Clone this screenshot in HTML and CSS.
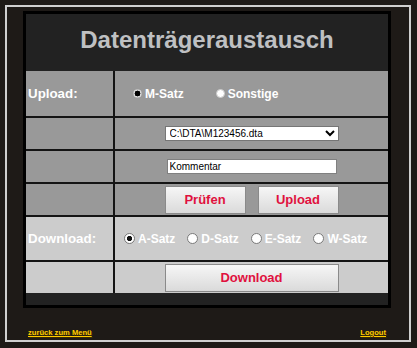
FILE: index.html
```html
<!DOCTYPE html>
<html lang="de">
<head>
    <meta charset="UTF-8">
    <meta name="viewport" content="width=device-width, initial-scale=1.0">
    <title>Datenträgeraustausch</title>
    <link rel="stylesheet" href="styles.css">
</head>
<body>
    <div class="frame">
        <div class="panel">
            <h1 class="title">Datenträgeraustausch</h1>

            <div class="form-grid">
                <!-- Upload -->
                <div class="label dark">Upload:</div>
                <div class="field dark radios radios-upload">
                    <label class="radio-item"><input type="radio" name="up" class="radio small" checked> M-Satz</label>
                    <label class="radio-item"><input type="radio" name="up" class="radio small"> Sonstige</label>
                </div>

                <div class="label dark"></div>
                <div class="field dark centered">
                    <select class="file-select">
                        <option>C:\DTA\M123456.dta</option>
                    </select>
                </div>

                <div class="label dark"></div>
                <div class="field dark centered">
                    <input type="text" class="comment" value="Kommentar">
                </div>

                <div class="label dark"></div>
                <div class="field dark centered buttons">
                    <button class="btn">Prüfen</button>
                    <button class="btn">Upload</button>
                </div>

                <!-- Download -->
                <div class="label light">Download:</div>
                <div class="field light radios radios-download">
                    <label class="radio-item"><input type="radio" name="down" class="radio" checked> A-Satz</label>
                    <label class="radio-item"><input type="radio" name="down" class="radio"> D-Satz</label>
                    <label class="radio-item"><input type="radio" name="down" class="radio"> E-Satz</label>
                    <label class="radio-item"><input type="radio" name="down" class="radio"> W-Satz</label>
                </div>

                <div class="label light"></div>
                <div class="field light centered">
                    <button class="btn btn-wide">Download</button>
                </div>
            </div>
        </div>

        <div class="links">
            <a href="#">zurück zum Menü</a>
            <a href="#">Logout</a>
        </div>
    </div>
</body>
</html>
```

FILE: styles.css
```css
body {
    margin: 0;
    padding: 0;
    background-color: #1e1a17;
    font-family: "Liberation Sans", Arial, sans-serif;
}
.frame {
    box-sizing: border-box;
    width: 406px;
    height: 337px;
    margin: 5px;
    padding: 4px 18px 0 16px;
    border: 2px solid #cfcfcf;
}
.panel {
    box-sizing: border-box;
    width: 368px;
    height: 297px;
    border: 3px solid #000;
    background-color: #222;
}
.title {
    margin: 0;
    height: 57px;
    line-height: 51px;
    text-align: center;
    font-size: 24px;
    font-weight: bold;
    color: #bfc0c2;
}
.form-grid {
    display: grid;
    grid-template-columns: 87px 1fr;
    grid-template-rows: 45px 31px 31px 31px 43px 31px;
    gap: 2px;
    background-color: #141414;
}
.dark {
    background-color: #999;
}
.light {
    background-color: #ccc;
}
.label {
    display: flex;
    align-items: center;
    padding-left: 2px;
    font-size: 13.33px;
    font-weight: bold;
    color: #fff;
}
.field {
    display: flex;
    align-items: center;
}
.centered {
    justify-content: center;
}
.radios {
    font-size: 12px;
    font-weight: bold;
    color: #fff;
}
.radios-upload {
    padding-left: 18px;
    gap: 32px;
}
.radios-download {
    padding-left: 9px;
    gap: 12px;
}
.radio-item {
    display: flex;
    align-items: center;
    gap: 3px;
}
.radio {
    appearance: none;
    -webkit-appearance: none;
    margin: 0;
    width: 11px;
    height: 11px;
    border-radius: 50%;
    border: 1px solid #7a7a7a;
    background: #fff;
}
.radio:checked {
    background: radial-gradient(circle, #111 0 38%, #fff 46%);
}
.radio.small {
    width: 9px;
    height: 9px;
    border: 1px solid #c8c8c8;
}
.radio.small:checked {
    background: radial-gradient(circle, #000 0 55%, #fff 65%);
}
.file-select {
    box-sizing: border-box;
    width: 174px;
    height: 15px;
    padding: 0;
    border: 1px solid #767676;
    border-radius: 0;
    background-color: #fff;
    font-family: "Liberation Sans", Arial, sans-serif;
    font-size: 10px;
    color: #000;
}
.comment {
    box-sizing: border-box;
    width: 170px;
    height: 15px;
    padding: 0 2px;
    border: 1px solid #808080;
    font-family: "Liberation Sans", Arial, sans-serif;
    font-size: 10px;
    color: #000;
}
.buttons {
    gap: 12px;
}
.btn {
    box-sizing: border-box;
    width: 81px;
    height: 28px;
    padding: 0;
    border: 1px solid #8a8a8a;
    background: linear-gradient(#f6f6f6, #dadada);
    font-family: "Liberation Sans", Arial, sans-serif;
    font-size: 13px;
    font-weight: bold;
    color: #e0113e;
}
.btn-wide {
    width: 174px;
}
.links {
    display: flex;
    justify-content: space-between;
    margin-top: 20px;
    padding: 0 5px;
    line-height: 10px;
}
.links a {
    font-size: 7.6px;
    font-weight: bold;
    color: #ffcc00;
    text-shadow: 1px 1px 0 #3a2a00;
}
```
